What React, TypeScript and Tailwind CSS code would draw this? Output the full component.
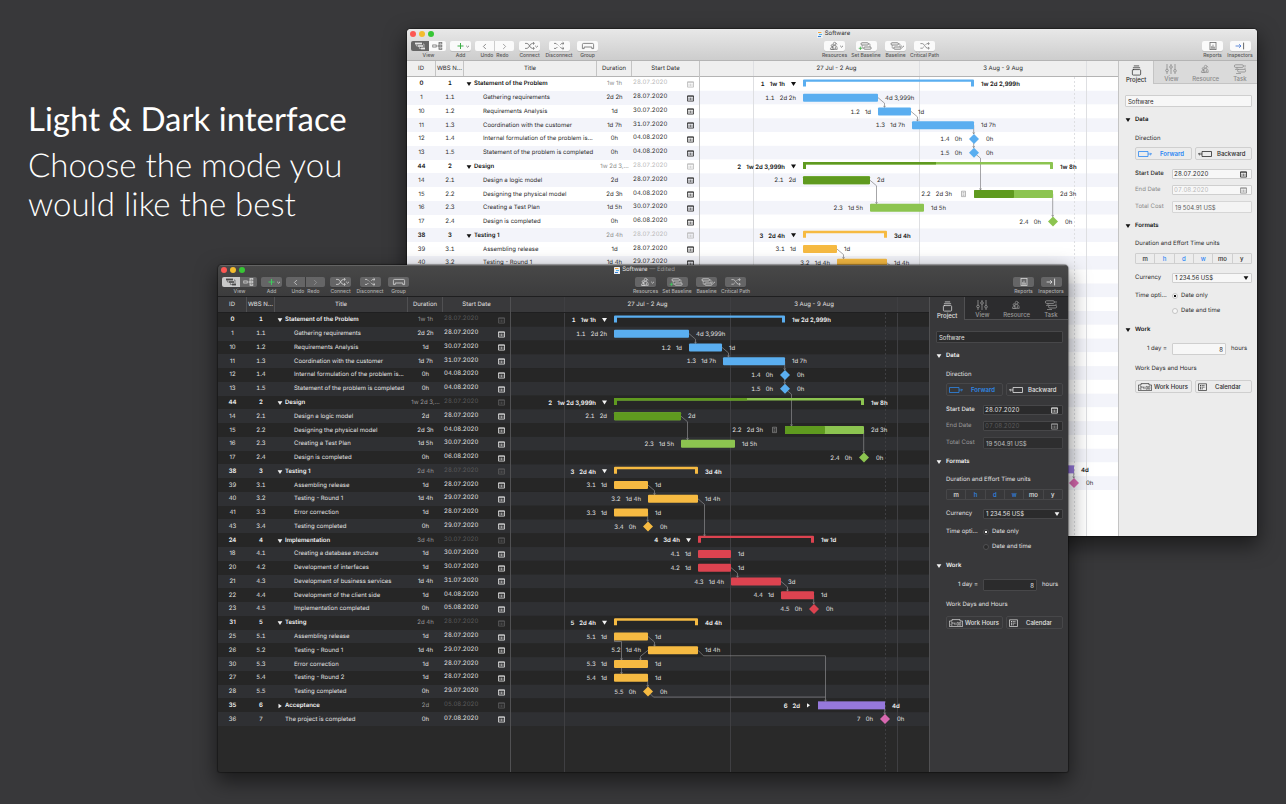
import type { ReactNode } from "react"
import { ChevronLeft, ChevronRight, GalleryVerticalEnd } from "lucide-react"
import { clsx } from "clsx"

type Mode = "light" | "dark"
type Kind = "group" | "bar" | "diamond" | "block"

interface Task {
  id: number
  wbs: string
  title: string
  duration: string
  date: string
  kind: Kind
  color: string
  start: number
  end: number
  after: string
  split?: number
  note?: boolean
  collapsed?: boolean
}

const BLUE = "#5aaef0"
const GREEN = "#8cc450"
const DONE = "#5f9a1f"
const AMBER = "#f6ba42"
const RED = "#dc4350"
const PURPLE = "#9678dc"
const PINK = "#d868b0"

// Start and end are distances from the left edge of the timeline.
const tasks: Task[] = [
  { id: 0, wbs: "1", title: "Statement of the Problem", duration: "1w 1h", date: "28.07.2020", kind: "group", color: BLUE, start: 103, end: 274, after: "1w 2d 2,999h" },
  { id: 1, wbs: "1.1", title: "Gathering requirements", duration: "2d 2h", date: "28.07.2020", kind: "bar", color: BLUE, start: 103, end: 178, after: "4d 3,999h" },
  { id: 10, wbs: "1.2", title: "Requirements Analysis", duration: "1d", date: "30.07.2020", kind: "bar", color: BLUE, start: 178, end: 211, after: "1d" },
  { id: 11, wbs: "1.3", title: "Coordination with the customer", duration: "1d 7h", date: "31.07.2020", kind: "bar", color: BLUE, start: 212, end: 274, after: "1d 7h" },
  { id: 12, wbs: "1.4", title: "Internal formulation of the problem is...", duration: "0h", date: "04.08.2020", kind: "diamond", color: BLUE, start: 274, end: 274, after: "0h" },
  { id: 13, wbs: "1.5", title: "Statement of the problem is completed", duration: "0h", date: "04.08.2020", kind: "diamond", color: BLUE, start: 274, end: 274, after: "0h" },
  { id: 44, wbs: "2", title: "Design", duration: "1w 2d 3,999h", date: "28.07.2020", kind: "group", color: GREEN, start: 103, end: 353, split: 236, after: "1w 8h" },
  { id: 14, wbs: "2.1", title: "Design a logic model", duration: "2d", date: "28.07.2020", kind: "bar", color: GREEN, start: 103, end: 170, split: 170, after: "2d" },
  { id: 15, wbs: "2.2", title: "Designing the physical model", duration: "2d 3h", date: "04.08.2020", kind: "bar", color: GREEN, start: 274, end: 353, split: 314, after: "2d 3h", note: true },
  { id: 16, wbs: "2.3", title: "Creating a Test Plan", duration: "1d 5h", date: "30.07.2020", kind: "bar", color: GREEN, start: 170, end: 224, after: "1d 5h" },
  { id: 17, wbs: "2.4", title: "Design is completed", duration: "0h", date: "06.08.2020", kind: "diamond", color: GREEN, start: 353, end: 353, after: "0h" },
  { id: 38, wbs: "3", title: "Testing 1", duration: "2d 4h", date: "28.07.2020", kind: "group", color: AMBER, start: 103, end: 187, after: "3d 4h" },
  { id: 39, wbs: "3.1", title: "Assembling release", duration: "1d", date: "28.07.2020", kind: "bar", color: AMBER, start: 103, end: 137, after: "1d" },
  { id: 40, wbs: "3.2", title: "Testing - Round 1", duration: "1d 4h", date: "29.07.2020", kind: "bar", color: AMBER, start: 137, end: 187, after: "1d 4h" },
  { id: 41, wbs: "3.3", title: "Error correction", duration: "1d", date: "28.07.2020", kind: "bar", color: AMBER, start: 103, end: 137, after: "1d" },
  { id: 43, wbs: "3.4", title: "Testing completed", duration: "0h", date: "29.07.2020", kind: "diamond", color: AMBER, start: 137, end: 137, after: "0h" },
  { id: 24, wbs: "4", title: "Implementation", duration: "3d 4h", date: "30.07.2020", kind: "group", color: RED, start: 187, end: 303, after: "1w 1d" },
  { id: 18, wbs: "4.1", title: "Creating a database structure", duration: "1d", date: "30.07.2020", kind: "bar", color: RED, start: 187, end: 220, after: "1d" },
  { id: 20, wbs: "4.2", title: "Development of interfaces", duration: "1d", date: "30.07.2020", kind: "bar", color: RED, start: 187, end: 220, after: "1d" },
  { id: 21, wbs: "4.3", title: "Development of business services", duration: "1d 4h", date: "31.07.2020", kind: "bar", color: RED, start: 220, end: 270, after: "3d" },
  { id: 22, wbs: "4.4", title: "Development of the client side", duration: "1d", date: "04.08.2020", kind: "bar", color: RED, start: 270, end: 303, after: "1d" },
  { id: 23, wbs: "4.5", title: "Implementation completed", duration: "0h", date: "05.08.2020", kind: "diamond", color: RED, start: 303, end: 303, after: "0h" },
  { id: 31, wbs: "5", title: "Testing", duration: "2d 4h", date: "28.07.2020", kind: "group", color: AMBER, start: 103, end: 187, after: "4d 4h" },
  { id: 25, wbs: "5.1", title: "Assembling release", duration: "1d", date: "28.07.2020", kind: "bar", color: AMBER, start: 103, end: 137, after: "1d" },
  { id: 26, wbs: "5.2", title: "Testing - Round 1", duration: "1d 4h", date: "29.07.2020", kind: "bar", color: AMBER, start: 137, end: 187, after: "1d 4h" },
  { id: 30, wbs: "5.3", title: "Error correction", duration: "1d", date: "28.07.2020", kind: "bar", color: AMBER, start: 103, end: 137, after: "1d" },
  { id: 27, wbs: "5.4", title: "Testing - Round 2", duration: "1d", date: "28.07.2020", kind: "bar", color: AMBER, start: 103, end: 137, after: "1d" },
  { id: 28, wbs: "5.5", title: "Testing completed", duration: "0h", date: "29.07.2020", kind: "diamond", color: AMBER, start: 137, end: 137, after: "0h" },
  { id: 35, wbs: "6", title: "Acceptance", duration: "2d", date: "05.08.2020", kind: "block", color: PURPLE, start: 307, end: 374, after: "4d", collapsed: true },
  { id: 36, wbs: "7", title: "The project is completed", duration: "0h", date: "07.08.2020", kind: "diamond", color: PINK, start: 374, end: 374, after: "0h" },
]

const ROWS_HEIGHT = 413
const rowY = (i: number) => ((i + 0.5) * ROWS_HEIGHT) / tasks.length

// The back window only lists the rows that the front window leaves in view.
const BACK_ROWS = 14

// finish-to-start links: [from row, to row]
const stepLinks = [[1, 2], [2, 3], [5, 8], [7, 9], [12, 13], [13, 16], [18, 19], [19, 20], [23, 24]]
const dropLinks = [[3, 4], [4, 5], [8, 10], [14, 15], [20, 21], [26, 27], [28, 29]]

const palette: Record<Mode, string> = {
  dark: "[--bar-top:#484848] [--bar-bottom:#3c3c3d] [--edge:#1f1f20] [--head:#39393b] [--line:#505052] [--grid:#3f3f42] [--base:#292929] [--row:#262626] [--stripe:#2f3033] [--text:#e2e2e2] [--strong:#f4f4f4] [--dim:#9a9a9a] [--faint:#5b5b5c] [--link:#8a8a8c] [--btn:#656566] [--glyph:#d8d8d8] [--on:#c9c9c9] [--on-glyph:#4a4a4a] [--label:#b0b0b0] [--panel:#38383a] [--tabs:#2c2c2e] [--field:#2b2b2c] [--field-line:#474749] [--accent:#2f86e4] [--arrow:#e8e8e8] [--plus:#3ecb5c]",
  light: "[--bar-top:#e8e8e8] [--bar-bottom:#cdcdcd] [--edge:#b4b4b4] [--head:#efefef] [--line:#c4c4c4] [--grid:#dedfe2] [--base:#ffffff] [--row:#ffffff] [--stripe:#f3f4fa] [--text:#2b2b2b] [--strong:#111111] [--dim:#8a8a8a] [--faint:#b9b9b9] [--link:#808083] [--btn:#fafafa] [--glyph:#6b6b6b] [--on:#666666] [--on-glyph:#e4e4e4] [--label:#555555] [--panel:#ececec] [--tabs:#dadada] [--field:#f7f7f7] [--field-line:#cfcfcf] [--accent:#2a86f3] [--arrow:#3a6fd0] [--plus:#3fae49]",
}

function Triangle({ right = false }: { right?: boolean }) {
  return (
    <svg viewBox="0 0 6 6" className="size-[6px] shrink-0 fill-(--strong)" aria-hidden="true">
      <path d={right ? "M1.5 .8 L4.8 3 L1.5 5.2Z" : "M.6 1.2 H5.4 L3 5Z"} />
    </svg>
  )
}

function CalendarIcon({ className }: { className?: string }) {
  return (
    <svg viewBox="0 0 7 7" className={clsx("size-[7px] shrink-0", className)} aria-hidden="true">
      <path d="M.5 .9 H6.5 V6.1 H.5Z" fill="none" stroke="currentColor" strokeWidth=".8" />
      <path d="M.5 1.2 H6.5" stroke="currentColor" strokeWidth=".8" />
      <path d="M2 2.6 V5.2 M3.5 2.6 V5.2 M5 2.6 V5.2" stroke="currentColor" strokeWidth=".6" />
    </svg>
  )
}

function Glyph({ children, wide = true }: { children: ReactNode; wide?: boolean }) {
  return (
    <svg
      viewBox={wide ? "0 0 18 10" : "0 0 12 10"}
      className={wide ? "h-[10px] w-[18px]" : "h-[10px] w-[12px]"}
      fill="none"
      stroke="currentColor"
      strokeWidth=".8"
      aria-hidden="true"
    >
      {children}
    </svg>
  )
}

const Caret = () => <path d="M14.2 4.8 L15.6 6.2 L17 4.8" />

const People = () => (
  <g strokeWidth=".7">
    <circle cx="8.6" cy="2.6" r="1.3" />
    <path d="M6.4 7.6 C6.4 5 7.4 4.4 8.8 4.4 C10.4 4.4 11.2 5.4 11.2 8.4 H5" />
    <circle cx="6.2" cy="4.6" r="1" />
    <path d="M4.4 8.4 C4.4 6.8 5 6.2 6.2 6.2 C7.4 6.2 8 7 8 8.4Z M9.4 5.4 V8 M9.8 2 L11 3.4" />
  </g>
)

const Baselines = () => (
  <g>
    <rect x="4" y="1.8" width="7.4" height="2.2" rx="1" />
    <rect x="6.8" y="6" width="7.4" height="2.2" rx="1" />
    <path d="M11.4 2.9 H13 V6 M6.8 7.1 H5.2 V4" strokeWidth=".5" />
  </g>
)

const labelClass = "text-[5px] leading-[7px] font-medium whitespace-nowrap text-(--label) [text-rendering:auto]"

interface ToolProps {
  label: string
  width: string
  children: ReactNode
}

function Tool({ label, width, children }: ToolProps) {
  return (
    <div className={clsx("flex flex-col items-center gap-px", width)}>
      <button
        type="button"
        aria-label={label}
        className="flex h-[10px] w-[21px] items-center justify-center rounded-[2px] bg-(--btn) text-(--glyph) shadow-[0_1px_0_rgba(0,0,0,0.1)]"
      >
        {children}
      </button>
      <span className={labelClass}>{label}</span>
    </div>
  )
}

function Toolbar() {
  return (
    <div className="flex items-start pt-[2px] pr-1 pb-px pl-1">
      <div className="flex gap-1">
        <div className="flex w-[35px] flex-col items-center gap-px">
          <div className="flex overflow-hidden rounded-[2px]">
            <button type="button" aria-label="Gantt view" className="flex h-[10px] w-[18px] items-center justify-center bg-(--on) text-(--on-glyph)">
              <Glyph>
                <g fill="currentColor" stroke="none">
                  <rect x="4" y="1.6" width="7" height="1.8" />
                  <rect x="7" y="4.2" width="5" height="1.6" />
                  <rect x="10" y="6.6" width="4" height="1.8" />
                </g>
                <path d="M5.4 3.4 V5 H7 M12 3 H13 V6.4 M8.4 5.8 V7.6 H10" strokeWidth=".6" />
              </Glyph>
            </button>
            <button type="button" aria-label="WBS view" className="flex h-[10px] w-[17px] items-center justify-center bg-(--btn) text-(--glyph)">
              <Glyph>
                <rect x="4" y="3.9" width="3.6" height="2.2" />
                <path d="M7.6 5 H10 M10 5 L11 2.2 M10 5 L11 7.8" strokeWidth=".6" />
                <rect x="10.6" y="1.2" width="3" height="1.6" />
                <rect x="10.6" y="4.2" width="3" height="1.6" />
                <rect x="10.6" y="7.2" width="3" height="1.6" />
              </Glyph>
            </button>
          </div>
          <span className={labelClass}>View</span>
        </div>
        <Tool label="Add" width="w-[21px]">
          <Glyph>
            <path d="M8.5 2 V8 M5.5 5 H11.5" className="stroke-(--plus)" strokeWidth="1" />
            <Caret />
          </Glyph>
        </Tool>
        <div className="flex w-[39px] flex-col items-center gap-px">
          <div className="flex overflow-hidden rounded-[2px]">
            <button type="button" aria-label="Undo" className="flex h-[10px] w-[20px] items-center justify-center border-r border-(--bar-bottom) bg-(--btn) text-(--glyph)">
              <ChevronLeft className="size-[9px]" />
            </button>
            <button type="button" aria-label="Redo" className="flex h-[10px] w-[19px] items-center justify-center bg-(--btn) text-(--dim)">
              <ChevronRight className="size-[9px]" />
            </button>
          </div>
          <div className={clsx("flex gap-[3px]", labelClass)}>
            <span>Undo</span>
            <span>Redo</span>
          </div>
        </div>
        <Tool label="Connect" width="w-[23px]">
          <Glyph>
            <path d="M4 2.4 H6 C8.4 2.4 8.6 7.4 11.4 7.4 H13 M4 7.4 H6 C8.4 7.4 8.6 2.4 11.4 2.4 H13 M12 1.2 L13.4 2.4 L12 3.6 M12 6.2 L13.4 7.4 L12 8.6" />
            <Caret />
          </Glyph>
        </Tool>
        <Tool label="Disconnect" width="w-[28px]">
          <Glyph>
            <path d="M4 2.4 H6 L7.4 3.8 M10.4 6 L11.6 7.4 H13.6 M4 7.4 H6 L7.4 6 M10.4 3.8 L11.6 2.4 H13.6 M12.6 1.2 L14 2.4 L12.6 3.6 M12.6 6.2 L14 7.4 L12.6 8.6" />
            <path d="M8.4 4.4 L9.4 5.4" strokeWidth=".5" />
          </Glyph>
        </Tool>
        <Tool label="Group" width="w-[21px]">
          <Glyph>
            <path d="M3.4 7.6 V3.6 Q3.4 2.4 4.6 2.4 H13.4 Q14.6 2.4 14.6 3.6 V7.6 H12.8 V6 H5.2 V7.6Z" />
          </Glyph>
        </Tool>
      </div>
      <div className="ml-[224px] flex gap-1">
        <Tool label="Resources" width="w-[25px]">
          <Glyph>
            <People />
            <Caret />
          </Glyph>
        </Tool>
        <Tool label="Set Baseline" width="w-[30px]">
          <Glyph>
            <Baselines />
            <path d="M3.4 5.6 V9 M1.7 7.3 H5.1" className="stroke-(--plus)" />
          </Glyph>
        </Tool>
        <Tool label="Baseline" width="w-[21px]">
          <Glyph>
            <Baselines />
            <Caret />
          </Glyph>
        </Tool>
        <Tool label="Critical Path" width="w-[29px]">
          <Glyph>
            <path d="M4.4 2.6 H6.4 C8.6 2.6 9 7.2 11.6 7.2 H13 M4.4 7.2 H6.4 L7.8 5.8 M9.6 3.8 L10.8 2.6 H13 M12 1.4 L13.4 2.6 L12 3.8 M12 6 L13.4 7.2 L12 8.4" strokeWidth=".7" />
          </Glyph>
        </Tool>
      </div>
      <div className="ml-auto flex gap-1">
        <Tool label="Reports" width="w-[21px]">
          <Glyph wide={false}>
            <rect x="3" y="1.4" width="6" height="7.2" />
            <path d="M4.8 7 V5 M6 7 V3.6 M7.2 7 V5.6 M4 7.2 H8" strokeWidth=".7" />
          </Glyph>
        </Tool>
        <Tool label="Inspectors" width="w-[26px]">
          <Glyph wide={false}>
            <path d="M1.6 5 H7 M5.2 3.2 L7 5 L5.2 6.8" className="stroke-(--arrow)" />
            <path d="M9.6 1.6 V8.4" strokeWidth="1" />
          </Glyph>
        </Tool>
      </div>
    </div>
  )
}

function TaskTable({ rows }: { rows: Task[] }) {
  const columns = "grid grid-cols-[29px_28px_133px_35px_67px]"
  return (
    <table className="block w-[293px] shrink-0 border-r border-(--line)">
      <thead className="block">
        <tr className={clsx(columns, "h-[16px] border-b border-(--edge) bg-(--head) text-[6px] leading-[15px] text-(--text)")}>
          {["ID", "WBS N...", "Title", "Duration", "Start Date"].map((name) => (
            <th key={name} scope="col" className="border-r border-(--line) text-center font-normal whitespace-nowrap last:border-r-0">
              {name}
            </th>
          ))}
        </tr>
      </thead>
      <tbody className="grid h-[413px] grid-rows-[repeat(30,minmax(0,1fr))] text-[6px] leading-[8px] text-(--text)">
        {rows.map((task) => {
          const parent = task.kind === "group" || task.kind === "block"
          return (
            <tr key={task.id} className={clsx(columns, "items-center bg-(--row) pt-px even:bg-(--stripe)")}>
              <td className={clsx("text-center", parent && "font-semibold text-(--strong)")}>{task.id}</td>
              <td className={clsx("text-center tabular-nums", parent && "font-semibold text-(--strong)")}>{task.wbs}</td>
              <td className="whitespace-nowrap">
                {parent ? (
                  <span className="flex items-center gap-[2px] pl-[2px] font-semibold text-(--strong)">
                    <Triangle right={task.collapsed} />
                    {task.title}
                  </span>
                ) : (
                  <span className={clsx("block", task.wbs.includes(".") ? "pl-[19px]" : "pl-[10px]")}>{task.title}</span>
                )}
              </td>
              <td className={clsx("text-center whitespace-nowrap", parent && "text-(--dim)")}>
                {task.duration.length > 8 ? "1w 2d 3,..." : task.duration}
              </td>
              <td className={clsx("flex items-center justify-between pr-[5px] pl-px", parent && "text-(--faint)")}>
                <span className="pb-[2px] tabular-nums">{task.date}</span>
                <CalendarIcon />
              </td>
            </tr>
          )
        })}
      </tbody>
    </table>
  )
}

function TaskShape({ task, y }: { task: Task; y: number }) {
  const { kind, color, start, end, split } = task
  if (kind === "diamond") {
    return <path d={`M${start} ${y - 5} L${start + 5} ${y} L${start} ${y + 5} L${start - 5} ${y}Z`} fill={color} />
  }
  if (kind === "group") {
    const top = y - 4.5
    return (
      <g>
        <path
          d={`M${start} ${top + 1} Q${start} ${top} ${start + 1} ${top} H${end - 1} Q${end} ${top} ${end} ${top + 1} V${top + 7} H${end - 3} V${top + 2.4} H${start + 3} V${top + 7} H${start}Z`}
          fill={color}
        />
        {split && <path d={`M${start} ${top} H${split} V${top + 2.4} H${start + 3} V${top + 7} H${start}Z`} fill={DONE} />}
      </g>
    )
  }
  return (
    <g>
      <rect x={start} y={y - 4} width={end - start} height="8" rx={kind === "block" ? 0 : 1} fill={color} />
      {split && <rect x={start} y={y - 4} width={split - start} height="8" rx="1" fill={DONE} />}
    </g>
  )
}

function Timeline({ shown }: { shown: number }) {
  const arrow = (x: number, y: number) => `M${x - 1} ${y - 1.6} L${x} ${y} L${x + 1} ${y - 1.6}`
  return (
    <div className="flex min-w-0 grow flex-col overflow-hidden">
      <div className="flex h-[16px] shrink-0 border-b border-(--edge) bg-(--head) text-[6px] leading-[16px] whitespace-nowrap text-(--text)">
        <span className="w-[53px] shrink-0" />
        <span className="w-[166px] shrink-0 border-l border-(--grid) text-center">27 Jul - 2 Aug</span>
        <span className="w-[167px] shrink-0 border-l border-(--grid) text-center">3 Aug - 9 Aug</span>
        <span className="grow border-l border-(--grid)" />
      </div>
      <svg className="block min-h-[413px] w-full grow" role="img" aria-label="Gantt chart">
        {tasks.map((task, i) => (
          <rect
            key={task.id}
            x="0"
            y={(i * ROWS_HEIGHT) / tasks.length}
            width="100%"
            height={ROWS_HEIGHT / tasks.length}
            className={i % 2 ? "fill-(--stripe)" : "fill-(--row)"}
          />
        ))}
        <g className="stroke-(--grid)">
          <line x1="53.5" x2="53.5" y1="0" y2="100%" />
          <line x1="219.5" x2="219.5" y1="0" y2="100%" />
          <line x1="386.5" x2="386.5" y1="0" y2="100%" />
          <line x1="374.5" x2="374.5" y1="0" y2="100%" strokeDasharray="2 2" />
        </g>
        <g className="fill-none stroke-(--link)" strokeWidth=".7">
          {stepLinks.map(([from, to]) => {
            const x = tasks[from].end
            const y = rowY(from)
            const top = rowY(to) - 4
            return <path key={`${from}-${to}`} d={`M${x} ${y} L${x + 6.5} ${y + 5.5} V${top} ${arrow(x + 6.5, top)}`} />
          })}
          {dropLinks.map(([from, to]) => {
            const x = tasks[from].end
            const top = rowY(to) - 5
            return <path key={`${from}-${to}`} d={`M${x - 0.3} ${rowY(from)} V${top} ${arrow(x - 0.3, top)}`} />
          })}
          <path d={`M103.5 ${rowY(23)} V${rowY(23) + 5} H110.5 V${rowY(25) - 4} ${arrow(110.5, rowY(25) - 4)}`} />
          <path d={`M110.5 ${rowY(25)} V${rowY(26) - 4} ${arrow(110.5, rowY(26) - 4)}`} />
          <path d={`M137 ${rowY(24)} L129.5 ${rowY(24) + 6} V${rowY(25) - 4} ${arrow(129.5, rowY(25) - 4)}`} />
          <path d={`M187 ${rowY(24)} L192.5 ${rowY(24) + 5.5} H314.5 V${rowY(28) - 4} ${arrow(314.5, rowY(28) - 4)}`} />
          <path d={`M137 ${rowY(27)} L142.5 ${rowY(27) + 5.5} H314.5`} />
        </g>
        {tasks.map((task, i) => {
          const y = rowY(i)
          const parent = task.kind === "group" || task.kind === "block"
          const after = task.kind === "diamond" ? 12 : 7
          let before = task.kind === "diamond" ? 12 : 7
          if (parent) before = 18
          if (task.note) before = 22
          return (
            <g key={task.id}>
              <TaskShape task={task} y={y} />
              {parent && (
                <path
                  d={task.collapsed ? `M${task.start - 11} ${y - 2.2} l3 2.2 l-3 2.2Z` : `M${task.start - 12} ${y - 2} h5 l-2.5 4Z`}
                  className="fill-(--strong)"
                />
              )}
              {task.note && (
                <path
                  d={`M${task.start - 12.5} ${y - 2.8} h4 v5.4 h-4Z m1 1.4 h2 m-2 1.4 h2 m-2 1.3 h2`}
                  className="fill-none stroke-(--dim)"
                  strokeWidth=".6"
                />
              )}
              <g className={clsx("text-[6px]", parent ? "fill-(--strong) font-semibold" : "fill-(--text)")}>
                {i < shown && (
                  <text x={task.start - before} y={y + 2.2} textAnchor="end">
                    <tspan className="tabular-nums">{task.wbs}</tspan>
                    <tspan dx="5">{task.duration}</tspan>
                  </text>
                )}
                {(i < shown || task.end > 370) && (
                  <text x={task.end + after} y={y + 2.2}>{task.after}</text>
                )}
              </g>
            </g>
          )
        })}
      </svg>
    </div>
  )
}

const fieldClass =
  "min-w-0 rounded-[1px] border border-(--field-line) bg-(--field) text-[6px] leading-[8px] text-(--text) outline-none"
const buttonClass =
  "flex h-[13px] w-[57px] items-center rounded-[2px] border border-(--field-line) px-[2px] text-[6px] leading-[8px] whitespace-nowrap"

function SectionTitle({ children, className }: { children: string; className: string }) {
  return (
    <h3 className={clsx("flex h-[8px] items-center gap-1 text-[6px] leading-[8px] font-semibold text-(--strong)", className)}>
      <Triangle />
      {children}
    </h3>
  )
}

const tabs = [
  { name: "Project", icon: <GalleryVerticalEnd className="size-[11px]" strokeWidth={1.6} /> },
  {
    name: "View",
    icon: (
      <Glyph wide={false}>
        <path d="M2 0 V5 M2 8 V10 M6 0 V1.6 M6 4.4 V10 M10 0 V5.4 M10 8.2 V10" />
        <circle cx="2" cy="6.5" r="1.3" />
        <circle cx="6" cy="3" r="1.3" />
        <circle cx="10" cy="6.8" r="1.3" />
      </Glyph>
    ),
  },
  {
    name: "Resource",
    icon: (
      <Glyph>
        <People />
      </Glyph>
    ),
  },
  {
    name: "Task",
    icon: (
      <Glyph>
        <rect x="3.4" y=".8" width="9" height="2.6" rx="1.2" />
        <path d="M12.4 2 H15 M6 3.4 V5.4 M8 5.4 H4 M14 3.6 V5.6" strokeWidth=".7" />
        <rect x="6.6" y="5.4" width="8" height="2.6" rx="1.2" />
        <path d="M5 9.6 H10" />
      </Glyph>
    ),
  },
]

function Inspector({ mode }: { mode: Mode }) {
  const id = (name: string) => `${mode}-${name}`
  return (
    <aside className="w-[139px] shrink-0 border-l border-(--line) bg-(--panel) text-[6px] leading-[8px] text-(--text)">
      <div className="flex h-[23px]" role="tablist">
        {tabs.map((tab, i) => (
          <button
            key={tab.name}
            type="button"
            role="tab"
            aria-selected={i === 0}
            className={clsx(
              "flex flex-1 flex-col items-center justify-end",
              i === 0 ? "text-(--text)" : "border-b border-(--line) bg-(--tabs) text-(--dim)",
              i === 1 && "border-l",
            )}
          >
            <span className="flex h-[12px] items-center">{tab.icon}</span>
            <span className="font-medium">{tab.name}</span>
          </button>
        ))}
      </div>

      <div className="flex flex-col pr-[5px] pl-[6px]">
        <input aria-label="Project name" defaultValue="Software" className={clsx(fieldClass, "mt-[11px] h-[12px] pl-[2px]")} />

        <SectionTitle className="mt-[9px]">Data</SectionTitle>
        <div className="flex flex-col pl-[10px]">
          <span className="mt-[11px]">Direction</span>
          <div className="mt-1 flex justify-between">
            <button type="button" className={clsx(buttonClass, "gap-2 font-semibold text-(--accent)")}>
              <svg viewBox="0 0 14 6" className="h-[6px] w-[14px]" fill="none" stroke="currentColor" strokeWidth=".8" aria-hidden="true">
                <path d="M.5 .5 H10 V5.5 H.5Z M10 3 H13.4 M12.2 1.8 L13.4 3 L12.2 4.2" />
              </svg>
              Forward
            </button>
            <button type="button" className={clsx(buttonClass, "gap-[5px] font-medium")}>
              <svg viewBox="0 0 14 6" className="h-[6px] w-[14px]" fill="none" stroke="currentColor" strokeWidth=".8" aria-hidden="true">
                <path d="M4 .5 H13.5 V5.5 H4Z M4 3 H.6 M1.8 1.8 L.6 3 L1.8 4.2" />
              </svg>
              Backward
            </button>
          </div>
          <div className="mt-[9px] flex h-[10px] items-center justify-between">
            <label htmlFor={id("start")} className="font-medium">Start Date</label>
            <div className={clsx(fieldClass, "flex h-[10px] w-[80px] items-center justify-between pr-1")}>
              <input id={id("start")} defaultValue="28.07.2020" className="w-[60px] bg-transparent pl-px tabular-nums outline-none" />
              <CalendarIcon />
            </div>
          </div>
          <div className="mt-[6px] flex h-[10px] items-center justify-between text-(--dim)">
            <label htmlFor={id("end")}>End Date</label>
            <div className={clsx(fieldClass, "flex h-[10px] w-[80px] items-center justify-between pr-1")}>
              <input id={id("end")} disabled defaultValue="07.08.2020" className="w-[60px] bg-transparent pl-px text-(--faint) tabular-nums" />
              <CalendarIcon className="text-(--dim)" />
            </div>
          </div>
          <div className="mt-[6px] flex h-[12px] items-center justify-between text-(--dim)">
            <label htmlFor={id("cost")}>Total Cost</label>
            <input id={id("cost")} readOnly value="19 504.91 US$" className={clsx(fieldClass, "h-[12px] w-[80px] pl-[2px] opacity-75")} />
          </div>
        </div>

        <SectionTitle className="mt-[9px]">Formats</SectionTitle>
        <div className="flex flex-col pl-[10px]">
          <span className="mt-[10px]">Duration and Effort Time units</span>
          <div className="mt-[5px] flex h-[11px] rounded-[1px] border border-(--field-line)">
            {["m", "h", "d", "w", "mo", "y"].map((unit) => (
              <button
                key={unit}
                type="button"
                className={clsx(
                  "flex-1 border-r border-(--field-line) font-medium last:border-r-0",
                  "hdw".includes(unit) && "text-(--accent)",
                )}
              >
                {unit}
              </button>
            ))}
          </div>
          <div className="mt-[9px] flex h-[10px] items-center justify-between">
            <label htmlFor={id("currency")}>Currency</label>
            <div className="relative h-[10px] w-[80px]">
              <select id={id("currency")} className={clsx(fieldClass, "block h-[10px] w-full appearance-none pl-[2px]")}>
                <option>1 234.56 US$</option>
              </select>
              <span className="pointer-events-none absolute top-[2px] right-[3px]">
                <Triangle />
              </span>
            </div>
          </div>
          <div role="radiogroup" aria-labelledby={id("time-label")} className="mt-[9px] flex">
            <span id={id("time-label")} className="w-[37px]">Time opti...</span>
            <div className="flex flex-col gap-[7px]">
              {["Date only", "Date and time"].map((name, i) => (
                <label key={name} className="flex h-[8px] items-center gap-[3px]">
                  <input
                    type="radio"
                    name={id("time")}
                    defaultChecked={i === 0}
                    className="size-[6px] appearance-none rounded-full border border-(--line) bg-(--field) checked:bg-[radial-gradient(circle,var(--strong)_40%,transparent_50%)]"
                  />
                  {name}
                </label>
              ))}
            </div>
          </div>
        </div>

        <SectionTitle className="mt-[11px]">Work</SectionTitle>
        <div className="flex flex-col pl-[10px]">
          <div className="mt-[9px] flex h-[12px] items-center gap-[5px]">
            <label htmlFor={id("hours")} className="w-[32px] text-right">1 day =</label>
            <input id={id("hours")} defaultValue="8" className={clsx(fieldClass, "h-[12px] w-[54px] pr-[2px] text-right")} />
            <span>hours</span>
          </div>
          <span className="mt-[10px]">Work Days and Hours</span>
          <div className="mt-[7px] flex justify-between">
            <button type="button" className={clsx(buttonClass, "gap-[2px] font-medium")}>
              <svg viewBox="0 0 14 8" className="h-[8px] w-[14px] shrink-0" fill="none" stroke="currentColor" strokeWidth=".7" aria-hidden="true">
                <path d="M.4 2 H3 V.6 H11 V2 H13.6 V7.6 H.4Z" />
                <path d="M2 3.4 H3.6 V4.8 H2 V6.2 H3.6 M4.8 3.4 V4.8 H6 M6 3.4 V6.2 M7 4 V4.4 M7 5.4 V5.8 M8 3.4 H9.4 V6.2 H8Z M10.4 3.4 H11.8 V6.2 H10.4Z" strokeWidth=".5" />
              </svg>
              Work Hours
            </button>
            <button type="button" className={clsx(buttonClass, "gap-2 font-medium")}>
              <svg viewBox="0 0 9 8" className="h-[8px] w-[9px] shrink-0" fill="none" stroke="currentColor" strokeWidth=".7" aria-hidden="true">
                <path d="M.5 .8 H8.5 V7.5 H.5Z" />
                <path d="M2 2.6 H7.2 M2 4.2 H7.2 M2 5.8 H5" strokeWidth="1" strokeDasharray="1 .7" />
              </svg>
              Calendar
            </button>
          </div>
        </div>
      </div>
    </aside>
  )
}

interface AppWindowProps {
  mode: Mode
  edited?: boolean
  shown?: number
  className: string
}

function AppWindow({ mode, edited, shown = tasks.length, className }: AppWindowProps) {
  return (
    <section
      aria-label={`Software, ${mode} mode`}
      className={clsx(
        "absolute flex min-h-[507px] flex-col overflow-hidden rounded-t-[4px] rounded-b-[2px] bg-(--base) shadow-[0_8px_20px_2px_rgba(0,0,0,0.5),0_0_1px_1px_rgba(0,0,0,0.35)]",
        palette[mode],
        className,
      )}
    >
      <header className="h-[32px] border-b border-(--edge) bg-linear-to-b from-(--bar-top) to-(--bar-bottom) shadow-[inset_0_1px_0_rgba(255,255,255,0.15)]">
        <div className="grid h-[10px] grid-cols-[1fr_auto_1fr] items-center pl-[3px]">
          <div className="flex gap-[3px]">
            <span className="size-[6px] rounded-full bg-[#fc5753]" />
            <span className="size-[6px] rounded-full bg-[#f3bc2e]" />
            <span className="size-[6px] rounded-full bg-[#37c635]" />
          </div>
          <h2 className="flex items-center gap-[2px] text-[6px] leading-[8px] text-(--text)">
            <svg viewBox="0 0 6 7" className="h-[7px] w-[6px]" aria-hidden="true">
              <rect width="6" height="7" rx=".6" fill="#e9eef2" />
              <path d="M1 1.5 H4.4" stroke="#f2a33c" />
              <path d="M2 3.5 H5" stroke="#54b1ea" />
              <path d="M1 5.5 H4" stroke="#3b82d8" />
            </svg>
            <span>
              Software{edited && <span className="text-(--dim)"> — Edited</span>}
            </span>
          </h2>
        </div>
        <Toolbar />
      </header>
      <div className="flex grow">
        <TaskTable rows={tasks.slice(0, shown)} />
        <Timeline shown={shown} />
        <Inspector mode={mode} />
      </div>
    </section>
  )
}

export default function App() {
  return (
    <main className="relative min-h-screen overflow-hidden bg-[#38383a] font-['Inter','Liberation_Sans',sans-serif] [text-rendering:geometricPrecision]">
      <div className="pt-[95px] pl-[28px] font-['Lato',sans-serif] text-white">
        <h1 className="text-[33px] leading-[48px]">Light &amp; Dark interface</h1>
        <p className="mt-[3px] text-[33px] leading-[39px] font-light">
          Choose the mode you
          <br />
          would like the best
        </p>
      </div>
      <AppWindow mode="light" shown={BACK_ROWS} className="top-[29px] right-[29px] left-[407px]" />
      <AppWindow mode="dark" edited className="top-[265px] right-[218px] left-[218px]" />
    </main>
  )
}
